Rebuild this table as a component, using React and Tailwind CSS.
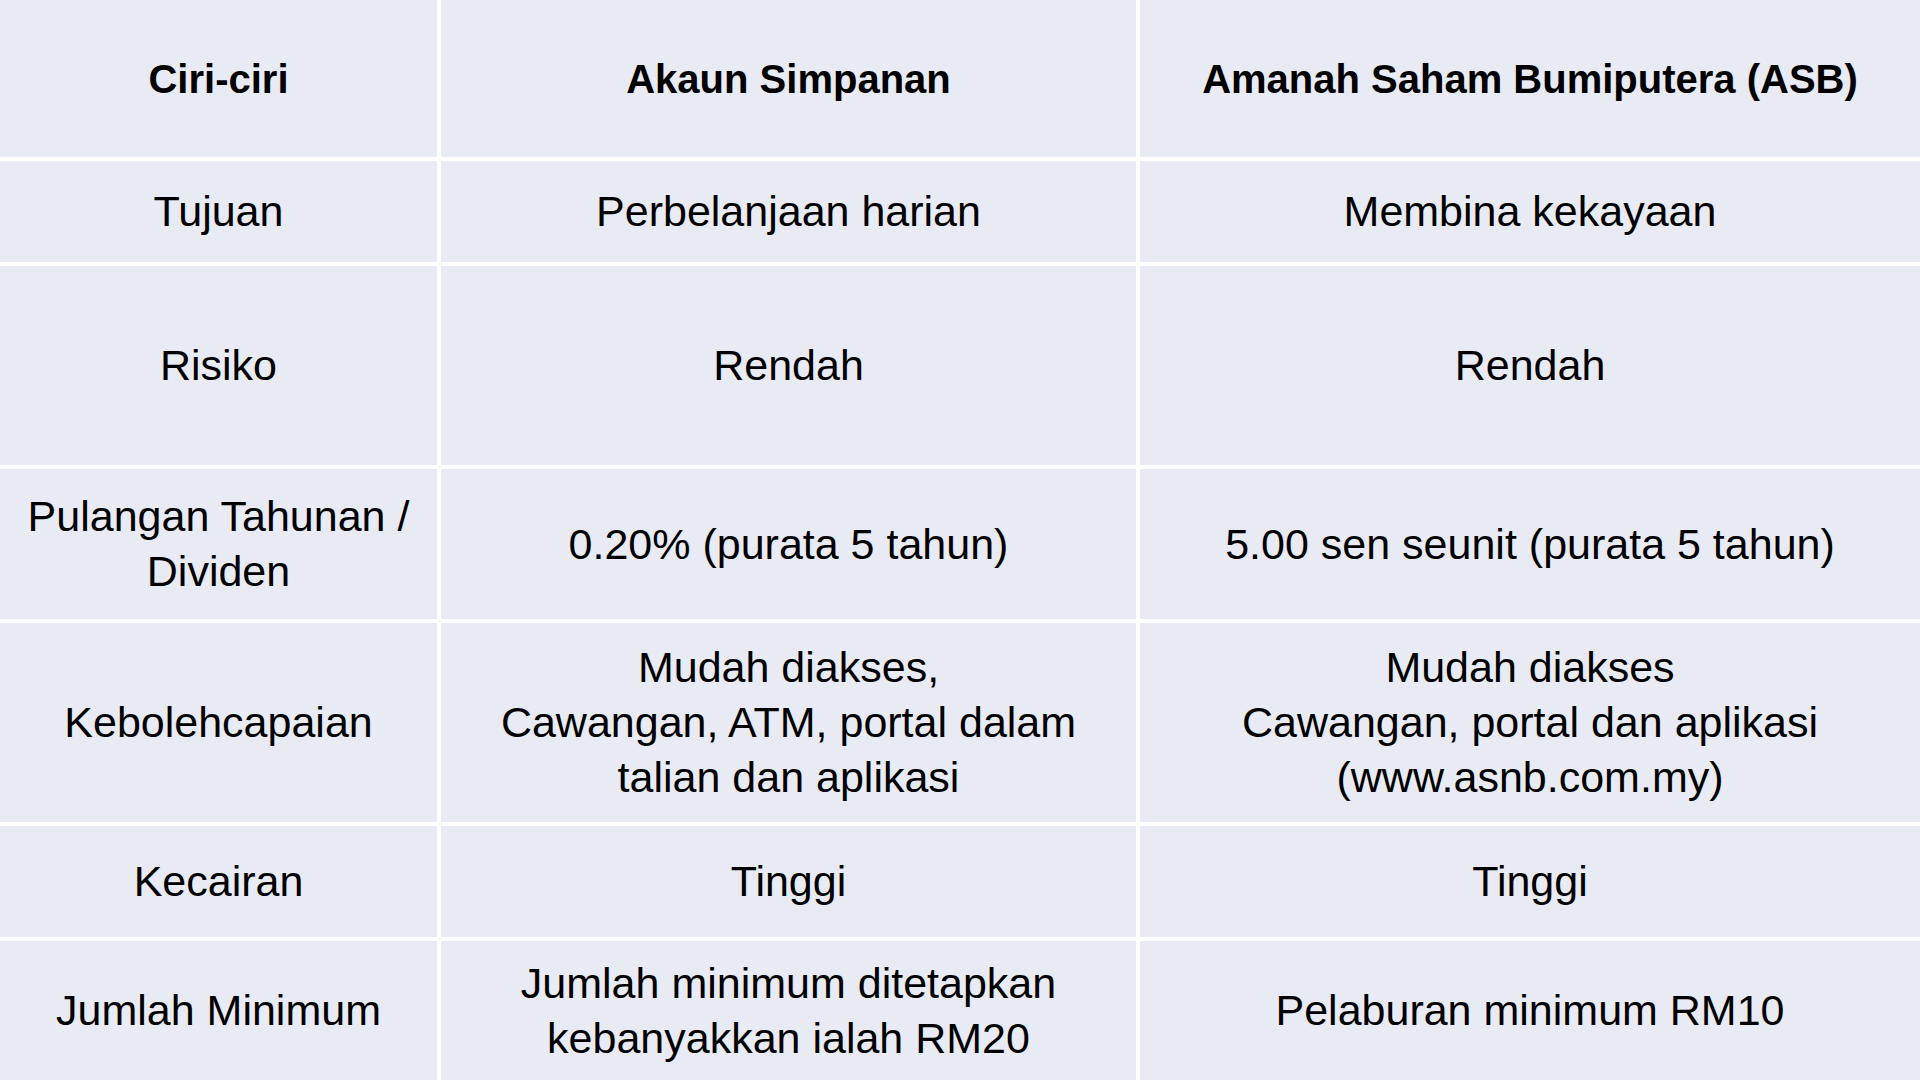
import React from "react";

const rows = [
  ["Tujuan", "Perbelanjaan harian", "Membina kekayaan"],
  ["Risiko", "Rendah", "Rendah"],
  [
    <>Pulangan Tahunan /<br />Dividen</>,
    "0.20% (purata 5 tahun)",
    "5.00 sen seunit (purata 5 tahun)",
  ],
  [
    "Kebolehcapaian",
    <>Mudah diakses,<br />Cawangan, ATM, portal dalam<br />talian dan aplikasi</>,
    <>Mudah diakses<br />Cawangan, portal dan aplikasi<br />(www.asnb.com.my)</>,
  ],
  ["Kecairan", "Tinggi", "Tinggi"],
  [
    "Jumlah Minimum",
    <>Jumlah minimum ditetapkan<br />kebanyakkan ialah RM20</>,
    "Pelaburan minimum RM10",
  ],
];

const headers = ["Ciri-ciri", "Akaun Simpanan", "Amanah Saham Bumiputera (ASB)"];

export default function App() {
  return (
    <div
      className="w-[1920px] h-[1080px] bg-white grid grid-cols-[437px_695px_780px] grid-rows-[157px_101px_199px_150px_199px_111px_139px] gap-[4px] text-black"
      style={{ fontFamily: "'Liberation Sans', Arial, sans-serif" }}
    >
      {headers.map((h, i) => (
        <div
          key={"h" + i}
          className="bg-[#e8ebf4] flex items-center justify-center text-center font-bold text-[40px] leading-[52px] whitespace-nowrap"
        >
          {h}
        </div>
      ))}
      {rows.map((r, ri) =>
        r.map((c, ci) => (
          <div
            key={ri + "-" + ci}
            className="bg-[#e8ebf4] flex items-center justify-center text-center text-[43px] leading-[55px] whitespace-nowrap"
          >
            <div>{c}</div>
          </div>
        ))
      )}
    </div>
  );
}
